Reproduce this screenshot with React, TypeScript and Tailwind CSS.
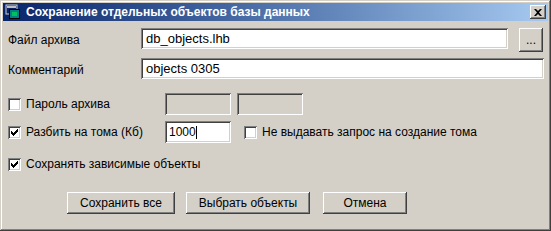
import React from "react";

const sunken =
  "shadow-[inset_1px_1px_0_#808080,inset_-1px_-1px_0_#ffffff,inset_2px_2px_0_#404040,inset_-2px_-2px_0_#d4d0c8]";
const raised =
  "shadow-[inset_-1px_-1px_0_#404040,inset_1px_1px_0_#ffffff,inset_-2px_-2px_0_#808080,inset_2px_2px_0_#d4d0c8]";

const CheckBox = ({ checked }: { checked?: boolean }) => (
  <div className={`w-[13px] h-[13px] bg-white shrink-0 flex items-center justify-center ${sunken}`}>
    {checked && (
      <svg width="7" height="7" viewBox="0 0 7 7">
        <path d="M0 2h1v1h1v1h1V3h1V2h1V1h1V0h1v3H6v1H5v1H4v1H3v1H2V6H1V5H0z" fill="#000" />
      </svg>
    )}
  </div>
);

const WinIcon = () => (
  <svg width="16" height="16" viewBox="0 0 16 16" className="shrink-0">
    <rect x="1" y="1" width="11" height="9" fill="#0a246a" stroke="#d4d0c8" strokeWidth="1" />
    <rect x="2" y="2" width="9" height="2" fill="#c0c0c0" />
    <rect x="4" y="5" width="11" height="10" fill="#000" />
    <rect x="5" y="6" width="9" height="8" fill="#008080" />
    <rect x="7" y="8" width="5" height="4" fill="#00c060" />
  </svg>
);

const Button = ({ label, w }: { label: string; w: string }) => (
  <div className={`${w} h-[22px] bg-[#d4d0c8] flex items-center justify-center text-black ${raised}`}>
    {label}
  </div>
);

export default function App() {
  return (
    <div
      className="w-[551px] h-[231px] bg-[#d4d0c8] p-[3px] text-[12px] text-black shadow-[inset_-1px_-1px_0_#404040,inset_1px_1px_0_#d4d0c8,inset_-2px_-2px_0_#808080,inset_2px_2px_0_#ffffff]"
      style={{ fontFamily: '"Liberation Sans", Arial, sans-serif' }}
    >
      {/* Title bar */}
      <div className="h-[18px] flex items-center bg-gradient-to-r from-[#0a246a] to-[#a6caf0] pl-[2px] pr-[2px]">
        <WinIcon />
        <div className="ml-[5px] text-white font-bold text-[12px] leading-none flex-1">
          Сохранение отдельных объектов базы данных
        </div>
        <div className={`w-[16px] h-[14px] bg-[#d4d0c8] flex items-center justify-center ${raised}`}>
          <svg width="8" height="7" viewBox="0 0 8 7">
            <path d="M0 0h2l2 2 2-2h2L5 3.5 8 7H6L4 5 2 7H0l3-3.5z" fill="#000" />
          </svg>
        </div>
      </div>

      {/* Body */}
      <div className="pl-[5px] pt-[7px] flex flex-col">
        <div className="flex items-start h-[24px]">
          <div className="w-[133px] h-[21px] pt-[3px] flex items-center">Файл архива</div>
          <div className={`w-[367px] h-[21px] bg-white flex items-center px-[5px] text-[13px] ${sunken}`}>
            db_objects.lhb
          </div>
          <div className={`ml-[11px] w-[24px] h-[24px] flex items-center justify-center ${raised}`}>...</div>
        </div>

        <div className="flex items-start mt-[6px] h-[21px]">
          <div className="w-[133px] h-[21px] pt-[3px] flex items-center">Комментарий</div>
          <div className={`w-[403px] h-[21px] bg-white flex items-center px-[5px] text-[13px] ${sunken}`}>
            objects 0305
          </div>
        </div>

        <div className="flex items-center mt-[14px] h-[22px]">
          <div className="w-[157px] flex items-center gap-[5px]">
            <CheckBox />
            <span>Пароль архива</span>
          </div>
          <div className={`w-[66px] h-[22px] ${sunken}`} />
          <div className={`ml-[6px] w-[66px] h-[22px] ${sunken}`} />
        </div>

        <div className="flex items-center mt-[6px] h-[22px]">
          <div className="w-[157px] flex items-center gap-[5px]">
            <CheckBox checked />
            <span>Разбить на тома (Кб)</span>
          </div>
          <div className={`w-[66px] h-[22px] bg-white flex items-center px-[4px] ${sunken}`}>
            1000<span className="w-[1px] h-[13px] bg-black" />
          </div>
          <div className="ml-[13px] flex items-center gap-[5px]">
            <CheckBox />
            <span>Не выдавать запрос на создание тома</span>
          </div>
        </div>

        <div className="flex items-center mt-[14px] h-[14px] gap-[5px]">
          <CheckBox checked />
          <span>Сохранять зависимые объекты</span>
        </div>

        <div className="flex items-center mt-[21px] pl-[59px] gap-[11px]">
          <Button label="Сохранить все" w="w-[108px]" />
          <Button label="Выбрать объекты" w="w-[124px]" />
          <div className="ml-[2px]">
            <Button label="Отмена" w="w-[84px]" />
          </div>
        </div>
      </div>
    </div>
  );
}
